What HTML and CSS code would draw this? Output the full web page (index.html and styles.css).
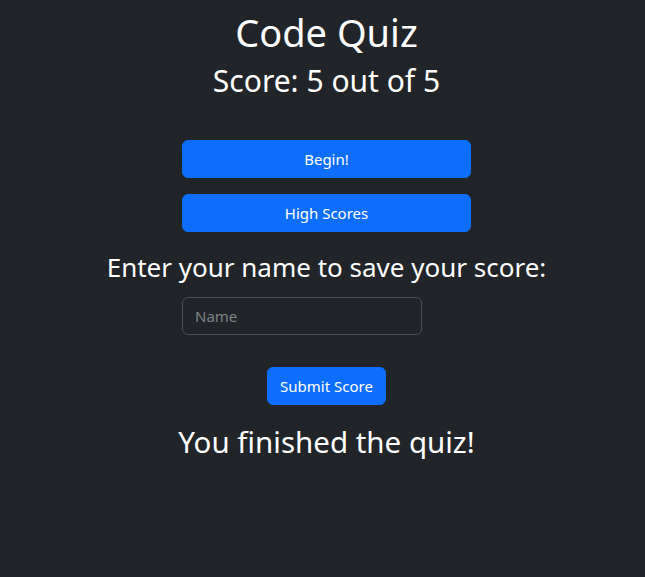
FILE: index.html
```html
<!DOCTYPE html>
<html lang="en">
<head>
<meta charset="utf-8">
<title>Code Quiz</title>
<link rel="stylesheet" href="styles.css">
</head>
<body>
<main class="page">
  <h1 class="title">Code Quiz</h1>
  <h2 class="score">Score: 5 out of 5</h2>
  <div class="actions">
    <button class="btn btn-wide" type="button">Begin!</button>
    <button class="btn btn-wide" type="button">High Scores</button>
  </div>
  <h3 class="prompt">Enter your name to save your score:</h3>
  <form class="save-form">
    <div class="field-row">
      <input class="field" type="text" placeholder="Name">
    </div>
    <button class="btn btn-submit" type="button">Submit Score</button>
  </form>
  <h2 class="finished">You finished the quiz!</h2>
</main>
</body>
</html>
```
FILE: styles.css
```css
html, body {
  margin: 0;
  padding: 0;
  background: #212529;
  color: #ffffff;
  font-family: "Noto Sans", "Open Sans", sans-serif;
}
.page {
  padding: 0 0 0 8px;
  text-align: center;
  display: flex;
  flex-direction: column;
  align-items: center;
}
.title {
  margin: 10px 0 0;
  font-size: 38px;
  font-weight: 400;
  line-height: 1.2;
}
.score {
  margin: 7px 0 0;
  font-size: 30px;
  font-weight: 400;
  line-height: 1.2;
}
.actions {
  margin-top: 41px;
  width: 289px;
  display: flex;
  flex-direction: column;
  gap: 16px;
}
.btn {
  background: #0d6efd;
  color: #fff;
  border: 1px solid #0d6efd;
  border-radius: 6px;
  font-family: inherit;
  font-size: 15px;
  line-height: 24px;
  padding: 6px 12px;
  cursor: pointer;
}
.btn-wide {
  width: 100%;
}
.prompt {
  margin: 20px 0 0;
  font-size: 26px;
  font-weight: 400;
  line-height: 1.2;
}
.save-form {
  width: 289px;
  display: flex;
  flex-direction: column;
  align-items: center;
}
.field-row {
  align-self: stretch;
  margin-top: 14px;
}
.field {
  box-sizing: border-box;
  display: block;
  width: 240px;
  height: 38px;
  background: #212529;
  border: 1px solid #495057;
  border-radius: 6px;
  padding: 6px 12px;
  color: #dee2e6;
  font-family: inherit;
  font-size: 15px;
}
.field::placeholder {
  color: #7d838a;
}
.btn-submit {
  margin-top: 32px;
}
.finished {
  margin: 19px 0 0;
  font-size: 29.5px;
  font-weight: 400;
  line-height: 1.2;
}
```
